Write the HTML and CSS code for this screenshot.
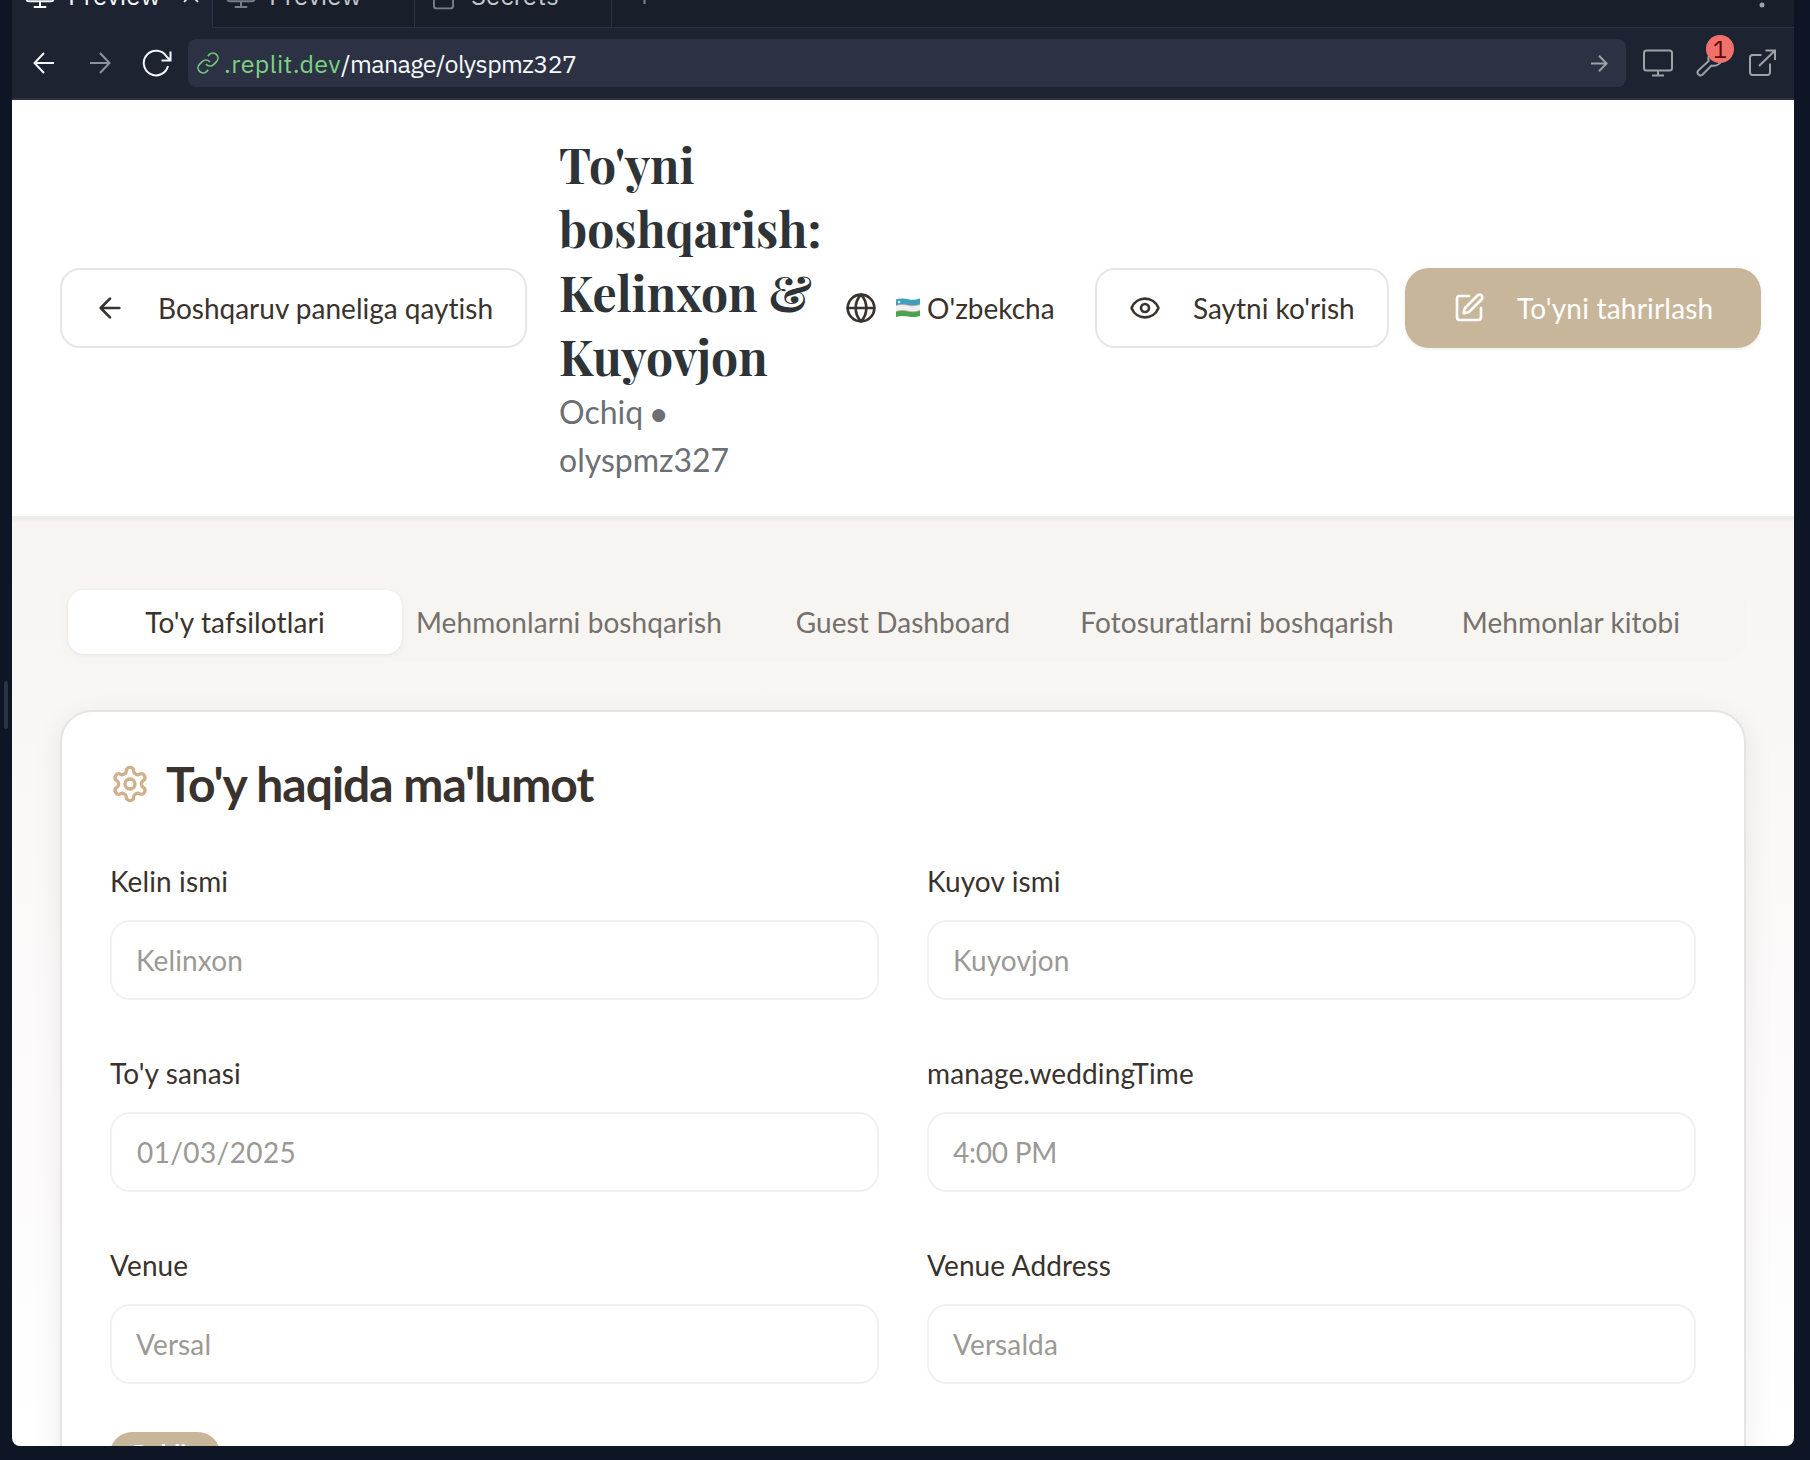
FILE: index.html
```html
<!DOCTYPE html>
<html lang="uz">
<head>
<meta charset="utf-8">
<title>To'yni boshqarish</title>
<link rel="stylesheet" href="styles.css">
</head>
<body>
<div class="gutter"><div class="grip"></div></div>
<div class="pane">
  <div class="tabstrip">
    <div class="ptab ptab-1 active">
      <svg class="i30" viewBox="0 0 24 24"><rect x="1.2" y="2" width="21.6" height="15" rx="2"/><path d="M12 17v4.6M7 21.6h10"/></svg>
      <span>Preview</span>
      <svg class="close" viewBox="0 0 16 16"><path d="M1 1l14 14M15 1L1 15"/></svg>
    </div>
    <div class="ptab ptab-2">
      <svg class="i30" viewBox="0 0 24 24"><rect x="1.2" y="2" width="21.6" height="15" rx="2"/><path d="M12 17v4.6M7 21.6h10"/></svg>
      <span>Preview</span>
    </div>
    <div class="ptab ptab-3">
      <svg class="lock" viewBox="0 0 22 30"><rect x="1" y="11" width="20" height="18" rx="2.5"/><path d="M5 11V7a6 6 0 0 1 12 0v4"/></svg>
      <span>Secrets</span>
    </div>
    <div class="ptab ptab-rest">
      <svg class="plus" viewBox="0 0 16 16"><path d="M8 0v16M0 8h16"/></svg>
      <svg class="dots" viewBox="0 0 6 26"><circle cx="3" cy="3" r="2.5"/><circle cx="3" cy="13" r="2.5"/><circle cx="3" cy="23" r="2.5"/></svg>
    </div>
  </div>
  <div class="toolbar">
    <svg class="nav back" viewBox="0 0 22 22"><path d="M21 11H1.500M11 1L1.500 11l9.500 10"/></svg>
    <svg class="nav fwd" viewBox="0 0 22 22"><path d="M1 11h19.500M11 1l9.500 10L11 21"/></svg>
    <svg class="reload" viewBox="0 0 30 28"><path d="M26 17A12.300 12.300 0 1 1 24.500 7.500L28.500 11.500M28.500 2.500v9H19.500"/></svg>
    <div class="url">
      <svg class="link" viewBox="0 0 24 24"><path d="M10 13a5 5 0 0 0 7.540.54l3-3a5 5 0 0 0-7.070-7.070l-1.720 1.710"/><path d="M14 11a5 5 0 0 0-7.540-.54l-3 3a5 5 0 0 0 7.070 7.070l1.710-1.710"/></svg>
      <span class="host">.replit.dev</span><span class="path">/manage/olyspmz327</span>
      <svg class="go" viewBox="0 0 17 17"><path d="M0 8.500h16M8 .8l7.700 7.700L8 16.200"/></svg>
    </div>
    <div class="tools">
      <svg class="mon" viewBox="0 0 30 28"><rect x="1" y="1.500" width="28" height="20" rx="2.500"/><path d="M15 21.500V26.500M9 26.500h12"/></svg>
      <div class="wrench-box">
        <svg class="wrench" viewBox="0 0 28 28"><path d="M13.500 5.500a8 8 0 0 0-.8 6.500L2.200 21.600a3 3 0 0 0 4.200 4.200L15.500 16.500a9 9 0 0 0 10-4.500"/></svg>
        <span class="count">1</span>
      </div>
      <svg class="ext" viewBox="0 0 28 28"><path d="M13.500 6H4.500A2.500 2.500 0 0 0 2 8.500v15A2.500 2.500 0 0 0 4.500 26h15a2.500 2.500 0 0 0 2.500-2.500V14.500M17.500 1.500H27V11M27 1.500L11 17"/></svg>
    </div>
  </div>
  <div class="page">
    <header class="header">
      <button class="btn outline b-back"><svg class="i32" viewBox="0 0 24 24"><path d="m12 19-7-7 7-7M19 12H5"/></svg><span>Boshqaruv paneliga qaytish</span></button>
      <div class="heading">
        <h1>To'yni<br>boshqarish:<br>Kelinxon &amp;<br>Kuyovjon</h1>
        <p>Ochiq <i class="bullet">●</i><br>olyspmz327</p>
      </div>
      <div class="lang">
        <svg class="i32" viewBox="0 0 24 24"><circle cx="12" cy="12" r="10"/><path d="M12 2a14.500 14.500 0 0 0 0 20 14.500 14.500 0 0 0 0-20M2 12h20"/></svg>
        <svg class="flag" viewBox="0 0 24 20">
          <path fill="#3f9fbd" d="M0 1.500C5 0 8 .3 12 1.200S19 2 24 .5V7C19 8.500 16 8.300 12 7.500S5 6.500 0 8z"/>
          <path fill="#f0f2f2" d="M0 7.500C5 6 8 6.300 12 7.200S19 8 24 6.500V13C19 14.500 16 14.300 12 13.500S5 12.500 0 14z"/>
          <path fill="#47a64c" d="M0 13.500C5 12 8 12.300 12 13.200S19 14 24 12.500V18C19 19.500 16 19.300 12 18.500S5 17.500 0 19z"/>
          <path fill="none" stroke="#c99" stroke-width=".7" d="M0 7.500C5 6 8 6.300 12 7.200S19 8 24 6.500M0 13.500C5 12 8 12.300 12 13.200S19 14 24 12.500"/>
          <circle cx="3" cy="4" r="1.300" fill="#d8edf4"/>
        </svg>
        <span>O'zbekcha</span>
      </div>
      <button class="btn outline b-view"><svg class="i32" viewBox="0 0 24 24"><path d="M2.060 12.350a1 1 0 0 1 0-.7 10.750 10.750 0 0 1 19.880 0 1 1 0 0 1 0 .7 10.750 10.750 0 0 1-19.880 0"/><circle cx="12" cy="12" r="3"/></svg><span>Saytni ko'rish</span></button>
      <button class="btn gold"><svg class="i32" viewBox="0 0 24 24"><path d="M12 3H5a2 2 0 0 0-2 2v14a2 2 0 0 0 2 2h14a2 2 0 0 0 2-2v-7"/><path d="M18.375 2.625a1 1 0 0 1 3 3l-9.013 9.014a2 2 0 0 1-.853.505l-2.873.84a.5.5 0 0 1-.62-.62l.84-2.873a2 2 0 0 1 .506-.852z"/></svg><span>To'yni tahrirlash</span></button>
    </header>
    <main class="main">
      <nav class="tabs">
        <div class="tab on">To'y tafsilotlari</div>
        <div class="tab">Mehmonlarni boshqarish</div>
        <div class="tab">Guest Dashboard</div>
        <div class="tab">Fotosuratlarni boshqarish</div>
        <div class="tab">Mehmonlar kitobi</div>
      </nav>
      <section class="card">
        <h2><svg class="gear" viewBox="0 0 24 24"><path d="M12.220 2h-.44a2 2 0 0 0-2 2v.18a2 2 0 0 1-1 1.730l-.43.25a2 2 0 0 1-2 0l-.15-.08a2 2 0 0 0-2.730.73l-.22.38a2 2 0 0 0 .73 2.730l.15.1a2 2 0 0 1 1 1.720v.51a2 2 0 0 1-1 1.740l-.15.09a2 2 0 0 0-.73 2.730l.22.38a2 2 0 0 0 2.730.73l.15-.08a2 2 0 0 1 2 0l.43.25a2 2 0 0 1 1 1.730V20a2 2 0 0 0 2 2h.44a2 2 0 0 0 2-2v-.18a2 2 0 0 1 1-1.730l.43-.25a2 2 0 0 1 2 0l.15.08a2 2 0 0 0 2.730-.73l.22-.39a2 2 0 0 0-.73-2.730l-.15-.08a2 2 0 0 1-1-1.740v-.5a2 2 0 0 1 1-1.740l.15-.09a2 2 0 0 0 .73-2.730l-.22-.38a2 2 0 0 0-2.730-.73l-.15.08a2 2 0 0 1-2 0l-.43-.25a2 2 0 0 1-1-1.730V4a2 2 0 0 0-2-2z"/><circle cx="12" cy="12" r="3"/></svg><span>To'y haqida ma'lumot</span></h2>
        <div class="fields">
          <label class="field"><span>Kelin ismi</span><input value="Kelinxon" disabled></label>
          <label class="field"><span>Kuyov ismi</span><input value="Kuyovjon" disabled></label>
          <label class="field"><span>To'y sanasi</span><input class="date" value="01/03/2025" disabled></label>
          <label class="field"><span>manage.weddingTime</span><input class="time" value="4:00 PM" disabled></label>
          <label class="field"><span>Venue</span><input value="Versal" disabled></label>
          <label class="field"><span>Venue Address</span><input value="Versalda" disabled></label>
        </div>
        <div class="badge">Public</div>
      </section>
    </main>
  </div>
</div>
</body>
</html>
```
FILE: styles.css
```css
* { box-sizing: border-box; }
body {
  margin: 0;
  width: 1810px;
  height: 1460px;
  overflow: hidden;
  display: flex;
  padding: 0 16px 14px 0;
  background: #0e1525;
  font-family: Lato, "Liberation Sans", sans-serif;
  font-size: 28px;
  font-variant-ligatures: none;
  color: #3a322d;
}
svg { fill: none; stroke: currentColor; stroke-width: 2; stroke-linecap: round; stroke-linejoin: round; flex: none; display: block; }
.gutter { width: 12px; flex: none; padding: 681px 0 0 4px; }
.grip { width: 4px; height: 48px; border-radius: 2px; background: #2b3245; }
.pane { width: 1782px; height: 1446px; overflow: hidden; display: flex; flex-direction: column; border-radius: 0 0 8px 8px; }

/* workspace tab strip, scrolled partly out of view */
.tabstrip, .toolbar { font-family: "IBM Plex Sans", "Noto Sans", sans-serif; }
.tabstrip { display: flex; height: 65px; margin-top: -37px; flex: none; background: #191e2b; color: #c2c8cc; font-size: 26px; }
.tabstrip svg { stroke-linecap: butt; }
.ptab { display: flex; align-items: center; border-right: 1px solid #2b3245; border-bottom: 1px solid #2b3245; }
.ptab svg { color: #787f89; }
.ptab.active { background: #1e2332; color: #f5f9fc; border-bottom-color: #1e2332; }
.ptab.active svg { color: #f5f9fc; }
.ptab-1 { width: 201px; padding-left: 13px; }
.ptab-2 { width: 202px; padding-left: 13px; }
.ptab-3 { width: 197px; padding-left: 18px; }
.ptab-rest { flex: 1; border-right: 0; padding: 0 29px 0 24px; justify-content: space-between; }
.i30 { width: 30px; height: 30px; margin-right: 13px; stroke-width: 1.6; }
.close { width: 16px; height: 16px; margin-left: 23px; stroke-width: 1.700; }
.lock { width: 21px; height: 30px; margin-right: 17px; }
.plus { width: 17px; height: 17px; }
.dots { width: 6px; height: 26px; }
.dots circle { fill: #9da2a6; stroke: none; }

.toolbar { height: 72px; flex: none; display: flex; align-items: center; background: #1e2332; border-bottom: 2px solid #2b3245; color: #f5f9fc; padding-left: 21px; }
.toolbar svg { stroke-linecap: butt; stroke-linejoin: miter; }
.nav { width: 22px; height: 22px; }
.fwd { margin-left: 34px; color: #8d929e; }
.reload { width: 30px; height: 28px; margin-left: 31px; }
.url { width: 1438px; height: 48px; margin-left: 16px; border-radius: 8px; background: #2c3143; display: flex; align-items: center; padding: 0 18px 0 8px; font-size: 25px; }
.url .link { width: 24px; height: 26px; stroke-width: 1.700; color: #6fc777; margin-right: 4px; }
.host { color: #7cd383; width: 117px; letter-spacing: .4px; }
.path { flex: 1; letter-spacing: -.6px; }
.go { width: 17px; height: 17px; color: #9da2a6; }
.tools { display: flex; align-items: center; color: #9da2a6; margin-left: 17px; }
.mon { width: 30px; height: 28px; }
.wrench-box { position: relative; margin-left: 23px; width: 28px; height: 28px; }
.wrench { width: 28px; height: 28px; }
.count { position: absolute; left: 10px; top: -14px; width: 28px; height: 28px; border-radius: 50%; background: #f0716b; color: #5c0a06; font: 24px/29px "IBM Plex Sans", "DejaVu Sans", sans-serif; text-align: center; }
.ext { width: 28px; height: 28px; margin-left: 24px; }

/* previewed page */
.page { flex: 1; min-height: 0; overflow: hidden; background: linear-gradient(#f8f3f2 0, #f8f4f3 450px, #f9f8f6 660px, #fdfbfc 1000px, #ffffff 1346px); }
.header { height: 418px; background: #fff; border-bottom: 2px solid #f2eee8; box-shadow: 0 1px 4px rgba(0,0,0,.08); display: flex; align-items: center; padding-left: 48px; }
.i32 { width: 32px; height: 32px; }
.btn { height: 80px; border-radius: 20px; font: inherit; color: inherit; display: flex; align-items: center; padding: 0; flex: none; white-space: nowrap; }
.outline { background: #fff; border: 2px solid #e5e5ea; }
.b-back { width: 467px; padding-left: 32px; gap: 32px; }
.b-view { width: 294px; margin-left: 41px; padding-left: 32px; gap: 32px; }
.gold { width: 356px; margin-left: 16px; padding-left: 48px; gap: 32px; border: 0; border-radius: 24px; background: #c8b69b; color: #fff; box-shadow: 0 1px 4px rgba(0,0,0,.08); letter-spacing: .2px; }
.heading { width: 286px; margin-left: 32px; flex: none; }
.heading h1 { margin: 0; font: bold 48px/64px "Playfair Display", "Liberation Serif", serif; color: #2d3337; white-space: nowrap; }
.heading p { margin: 0; font-size: 32px; line-height: 48px; height: 96px; color: #6c7074; }
.bullet { font: 17px/1 "DejaVu Sans", sans-serif; vertical-align: 4.500px; }
.lang { display: flex; align-items: center; width: 209px; flex: none; white-space: nowrap; }
.flag { width: 24px; height: 20px; margin: 0 7px 0 19px; stroke: none; }

.main { padding: 64px 48px 0 48px; }
.tabs { height: 80px; border-radius: 24px; background: #f6f5f1; padding: 8px; display: grid; grid-template-columns: repeat(5, 1fr); }
.tab { display: flex; align-items: center; justify-content: center; color: #76706c; white-space: nowrap; border-radius: 16px; letter-spacing: .08px; }
.tab.on { background: #fff; color: #3a322d; box-shadow: 0 1px 4px rgba(0,0,0,.08); letter-spacing: .15px; }
.card { margin-top: 48px; height: 900px; background: #fff; border: 2px solid #e5e4e2; border-radius: 32px; padding: 48px; box-shadow: 0 8px 30px rgba(0,0,0,.08); }
.card h2 { margin: 0; height: 48px; display: flex; align-items: center; gap: 16px; font-size: 48px; line-height: 48px; font-weight: 700; letter-spacing: -1.020px; white-space: nowrap; }
.gear { width: 40px; height: 40px; color: #d0b08a; }
.fields { margin-top: 48px; display: grid; grid-template-columns: 1fr 1fr; column-gap: 48px; row-gap: 48px; }
.field { display: flex; flex-direction: column; height: 144px; letter-spacing: .12px; }
.field span { line-height: 50px; height: 64px; }
.field input { height: 80px; width: 100%; border: 2px solid #f1f1f1; border-radius: 20px; background: #fff; color: #9c9895; font: inherit; letter-spacing: .12px; padding: 0 24px; }
.field .date { letter-spacing: .4px; padding-left: 25px; }
.field .time { letter-spacing: -.25px; }
.badge { width: 110px; height: 44px; margin-top: 48px; border-radius: 22px; background: #c8b69b; color: #fff; font-size: 24px; font-weight: 700; line-height: 44px; text-align: center; }
```
